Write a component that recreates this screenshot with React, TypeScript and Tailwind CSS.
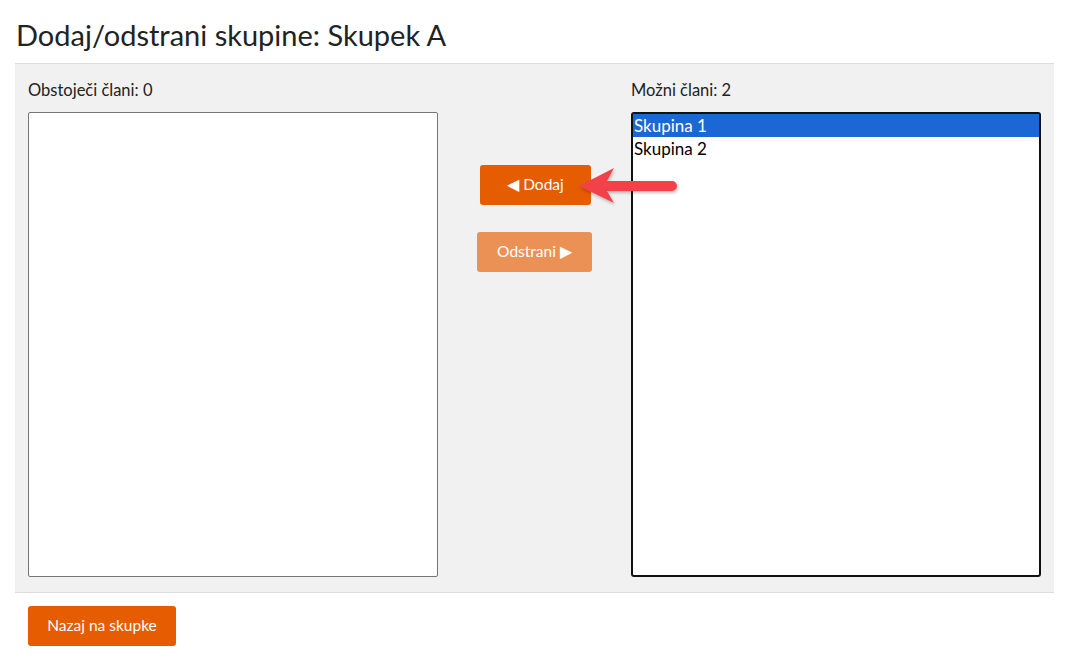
import { useState } from 'react'

const groups = ['Skupina 1', 'Skupina 2']

export default function App() {
  const [selected, setSelected] = useState('Skupina 1')

  return (
    <div className="min-h-screen bg-white text-[#222] font-['Lato','Noto_Sans',sans-serif]">
      <h1 className="px-4 pt-[17px] pb-[10px] text-[29px] leading-[36px] text-[#222]">
        Dodaj/odstrani skupine: Skupek A
      </h1>

      <div className="ml-[15px] w-[1039px] border-y border-[#dcdcdc] bg-[#f1f1f1] px-[13px] pt-[15px] pb-[15px]">
        <div className="grid grid-cols-[410px_1fr_410px]">
          <div>
            <div className="h-[33px] text-[16.5px] leading-[22px]">Obstoječi člani: 0</div>
            <div className="h-[465px] rounded-[2px] border border-[#767676] bg-white" />
          </div>

          <div className="relative flex flex-col items-center pt-[86px]">
            <button
              type="button"
              className="ml-[2px] h-[40px] w-[111px] rounded-[3px] bg-[#e65c00] text-[15.5px] text-white"
            >
              ◀ Dodaj
            </button>
            <button
              type="button"
              className="mt-[27px] h-[40px] w-[115px] rounded-[3px] bg-[#eb9156] text-[15.5px] text-white"
            >
              Odstrani ▶
            </button>

            <svg
              className="absolute left-[136px] top-[85px] overflow-visible"
              width="110"
              height="45"
              viewBox="0 0 110 45"
            >
              <defs>
                <filter id="sh" x="-20%" y="-40%" width="140%" height="180%">
                  <feDropShadow dx="1" dy="2" stdDeviation="1.5" floodColor="#000" floodOpacity="0.25" />
                </filter>
              </defs>
              <path
                filter="url(#sh)"
                d="M5 22 L40 4 L33 17 L98 17 A5 5 0 0 1 98 27 L33 27 L40 39 Z"
                fill="#f2434a"
              />
            </svg>
          </div>

          <div>
            <div className="h-[33px] text-[16.5px] leading-[22px]">Možni člani: {groups.length}</div>
            <div className="h-[465px] rounded-[3px] border-2 border-[#111] bg-white text-[17px] leading-[23px]">
              {groups.map((g) => (
                <div
                  key={g}
                  onClick={() => setSelected(g)}
                  className={
                    g === selected ? 'bg-[#1b68d4] pl-[1px] text-white' : 'pl-[1px] text-black'
                  }
                >
                  {g}
                </div>
              ))}
            </div>
          </div>
        </div>
      </div>

      <div className="px-[28px] pt-[13px]">
        <button
          type="button"
          className="h-[40px] w-[148px] rounded-[3px] bg-[#e65c00] text-[15.5px] text-white"
        >
          Nazaj na skupke
        </button>
      </div>
    </div>
  )
}
